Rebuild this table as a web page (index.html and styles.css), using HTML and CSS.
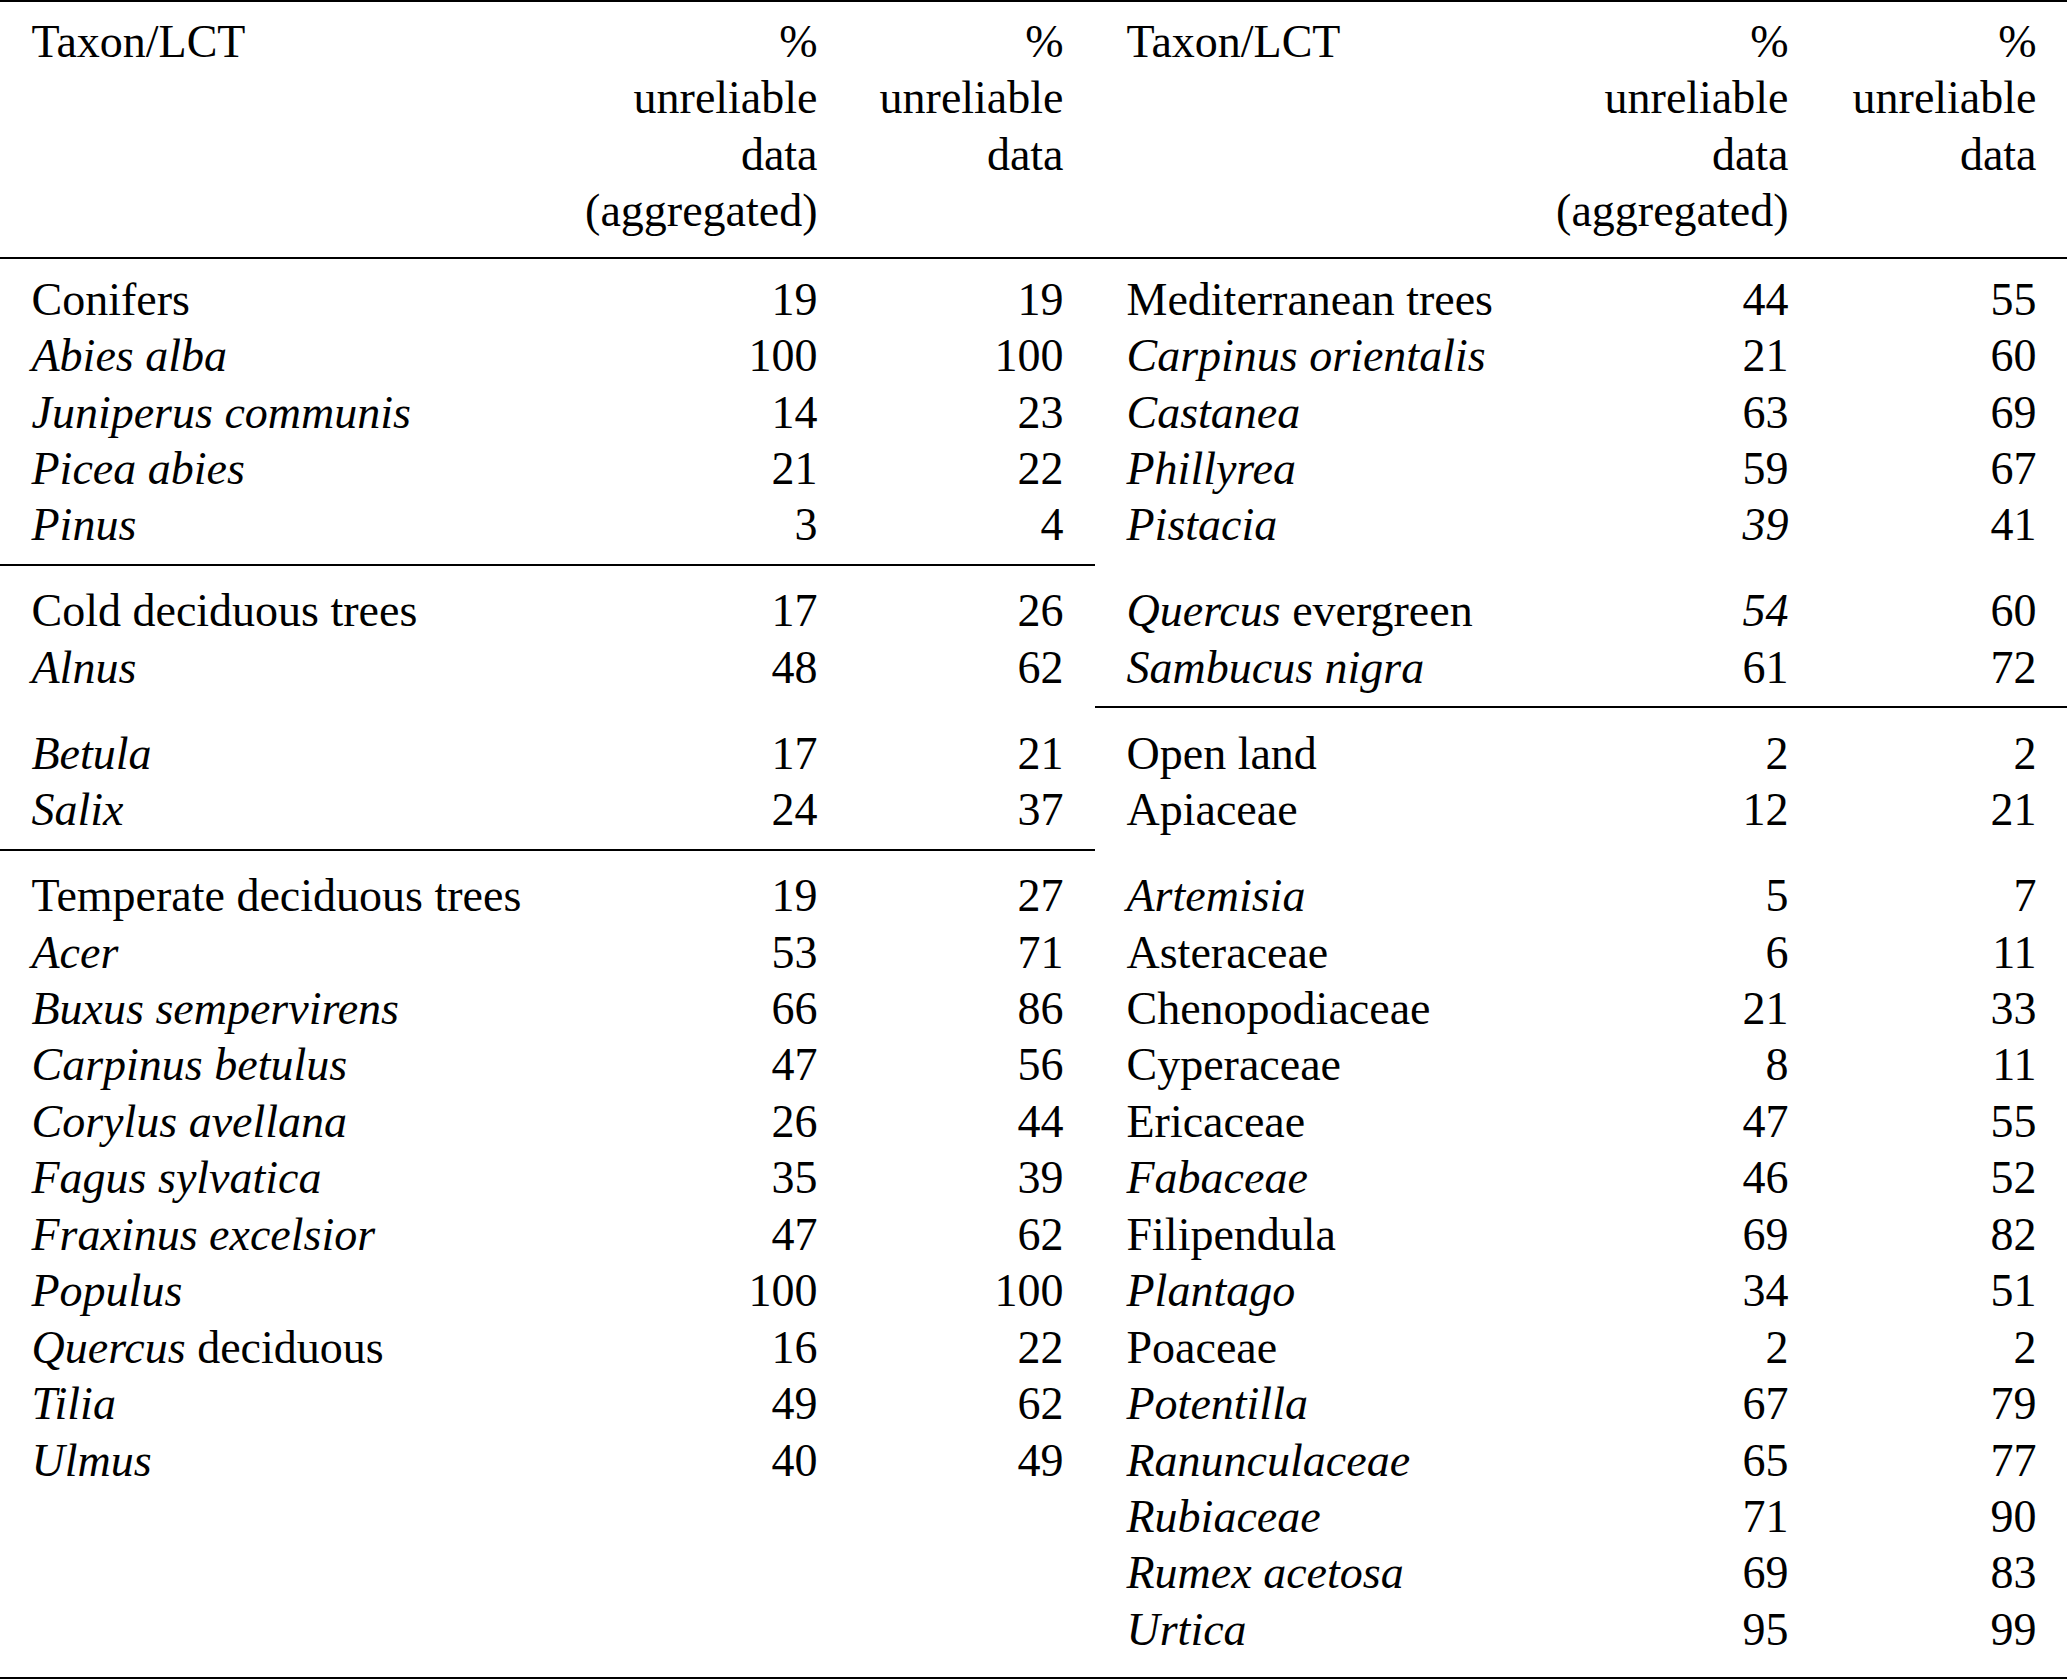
FILE: index.html
```html
<!DOCTYPE html>
<html lang="en">
<head>
<meta charset="utf-8">
<title>Unreliable data by taxon/LCT</title>
<link rel="stylesheet" href="styles.css">
</head>
<body>
<table class="tbl">
  <colgroup>
    <col class="c-name-l">
    <col class="c-agg">
    <col class="c-raw">
    <col class="c-name-r">
    <col class="c-agg">
    <col class="c-raw">
  </colgroup>
  <thead>
    <tr>
      <th class="name">Taxon/LCT</th>
      <th class="num">%<br>unreliable<br>data<br>(aggregated)</th>
      <th class="num">%<br>unreliable<br>data</th>
      <th class="name">Taxon/LCT</th>
      <th class="num">%<br>unreliable<br>data<br>(aggregated)</th>
      <th class="num last">%<br>unreliable<br>data</th>
    </tr>
  </thead>
  <tbody>
    <tr>
      <td class="name">Conifers</td><td class="num">19</td><td class="num">19</td>
      <td class="name">Mediterranean trees</td><td class="num">44</td><td class="num last">55</td>
    </tr>
    <tr>
      <td class="name"><em>Abies alba</em></td><td class="num">100</td><td class="num">100</td>
      <td class="name"><em>Carpinus orientalis</em></td><td class="num">21</td><td class="num last">60</td>
    </tr>
    <tr>
      <td class="name"><em>Juniperus communis</em></td><td class="num">14</td><td class="num">23</td>
      <td class="name"><em>Castanea</em></td><td class="num">63</td><td class="num last">69</td>
    </tr>
    <tr>
      <td class="name"><em>Picea abies</em></td><td class="num">21</td><td class="num">22</td>
      <td class="name"><em>Phillyrea</em></td><td class="num">59</td><td class="num last">67</td>
    </tr>
    <tr class="pre">
      <td class="name ru"><em>Pinus</em></td><td class="num ru">3</td><td class="num ru">4</td>
      <td class="name"><em>Pistacia</em></td><td class="num"><em>39</em></td><td class="num last">41</td>
    </tr>
    <tr class="post">
      <td class="name">Cold deciduous trees</td><td class="num">17</td><td class="num">26</td>
      <td class="name"><em>Quercus</em> evergreen</td><td class="num"><em>54</em></td><td class="num last">60</td>
    </tr>
    <tr class="pre">
      <td class="name"><em>Alnus</em></td><td class="num">48</td><td class="num">62</td>
      <td class="name ru"><em>Sambucus nigra</em></td><td class="num ru">61</td><td class="num last ru">72</td>
    </tr>
    <tr class="post">
      <td class="name"><em>Betula</em></td><td class="num">17</td><td class="num">21</td>
      <td class="name">Open land</td><td class="num">2</td><td class="num last">2</td>
    </tr>
    <tr class="pre">
      <td class="name ru"><em>Salix</em></td><td class="num ru">24</td><td class="num ru">37</td>
      <td class="name">Apiaceae</td><td class="num">12</td><td class="num last">21</td>
    </tr>
    <tr class="post">
      <td class="name">Temperate deciduous trees</td><td class="num">19</td><td class="num">27</td>
      <td class="name"><em>Artemisia</em></td><td class="num">5</td><td class="num last">7</td>
    </tr>
    <tr>
      <td class="name"><em>Acer</em></td><td class="num">53</td><td class="num">71</td>
      <td class="name">Asteraceae</td><td class="num">6</td><td class="num last">11</td>
    </tr>
    <tr>
      <td class="name"><em>Buxus sempervirens</em></td><td class="num">66</td><td class="num">86</td>
      <td class="name">Chenopodiaceae</td><td class="num">21</td><td class="num last">33</td>
    </tr>
    <tr>
      <td class="name"><em>Carpinus betulus</em></td><td class="num">47</td><td class="num">56</td>
      <td class="name">Cyperaceae</td><td class="num">8</td><td class="num last">11</td>
    </tr>
    <tr>
      <td class="name"><em>Corylus avellana</em></td><td class="num">26</td><td class="num">44</td>
      <td class="name">Ericaceae</td><td class="num">47</td><td class="num last">55</td>
    </tr>
    <tr>
      <td class="name"><em>Fagus sylvatica</em></td><td class="num">35</td><td class="num">39</td>
      <td class="name"><em>Fabaceae</em></td><td class="num">46</td><td class="num last">52</td>
    </tr>
    <tr>
      <td class="name"><em>Fraxinus excelsior</em></td><td class="num">47</td><td class="num">62</td>
      <td class="name">Filipendula</td><td class="num">69</td><td class="num last">82</td>
    </tr>
    <tr>
      <td class="name"><em>Populus</em></td><td class="num">100</td><td class="num">100</td>
      <td class="name"><em>Plantago</em></td><td class="num">34</td><td class="num last">51</td>
    </tr>
    <tr>
      <td class="name"><em>Quercus</em> deciduous</td><td class="num">16</td><td class="num">22</td>
      <td class="name">Poaceae</td><td class="num">2</td><td class="num last">2</td>
    </tr>
    <tr>
      <td class="name"><em>Tilia</em></td><td class="num">49</td><td class="num">62</td>
      <td class="name"><em>Potentilla</em></td><td class="num">67</td><td class="num last">79</td>
    </tr>
    <tr>
      <td class="name"><em>Ulmus</em></td><td class="num">40</td><td class="num">49</td>
      <td class="name"><em>Ranunculaceae</em></td><td class="num">65</td><td class="num last">77</td>
    </tr>
    <tr>
      <td class="name"></td><td class="num"></td><td class="num"></td>
      <td class="name"><em>Rubiaceae</em></td><td class="num">71</td><td class="num last">90</td>
    </tr>
    <tr>
      <td class="name"></td><td class="num"></td><td class="num"></td>
      <td class="name"><em>Rumex acetosa</em></td><td class="num">69</td><td class="num last">83</td>
    </tr>
    <tr>
      <td class="name"></td><td class="num"></td><td class="num"></td>
      <td class="name"><em>Urtica</em></td><td class="num">95</td><td class="num last">99</td>
    </tr>
  </tbody>
</table>
</body>
</html>
```

FILE: styles.css
```css
html, body {
  margin: 0;
  padding: 0;
  background: #ffffff;
  color: #000000;
}

body {
  font-family: "Liberation Serif", "Times New Roman", serif;
  font-size: 46px;
}

.tbl {
  width: 2067px;
  table-layout: fixed;
  border-collapse: separate;
  border-spacing: 0;
  line-height: 56.43px;
}

.c-name-l { width: 555px; }
.c-agg { width: 294px; }
.c-raw { width: 246px; }
.c-name-r { width: 431px; }
.tbl col:last-child { width: 247px; }

.tbl th,
.tbl td {
  padding: 0;
  vertical-align: top;
  font-weight: normal;
  white-space: nowrap;
}

.name {
  text-align: left;
  padding-left: 31.5px !important;
}

.num {
  text-align: right;
  padding-right: 31.5px !important;
}

.num.last {
  padding-right: 30.5px !important;
}

.tbl thead th {
  border-top: 2px solid #000;
  border-bottom: 2px solid #000;
  padding-top: 11.7px;
  padding-bottom: 17.5px;
}

.tbl tbody tr:first-child td {
  padding-top: 12.8px;
}

.tbl tbody tr:last-child td {
  padding-bottom: 18.5px;
  border-bottom: 2px solid #000;
}

.tbl tr.pre td {
  padding-bottom: 10px;
}

.tbl tr.pre td.ru {
  border-bottom: 2px solid #000;
}

.tbl tr.post td {
  padding-top: 17.5px;
}

em {
  font-style: italic;
}
```
